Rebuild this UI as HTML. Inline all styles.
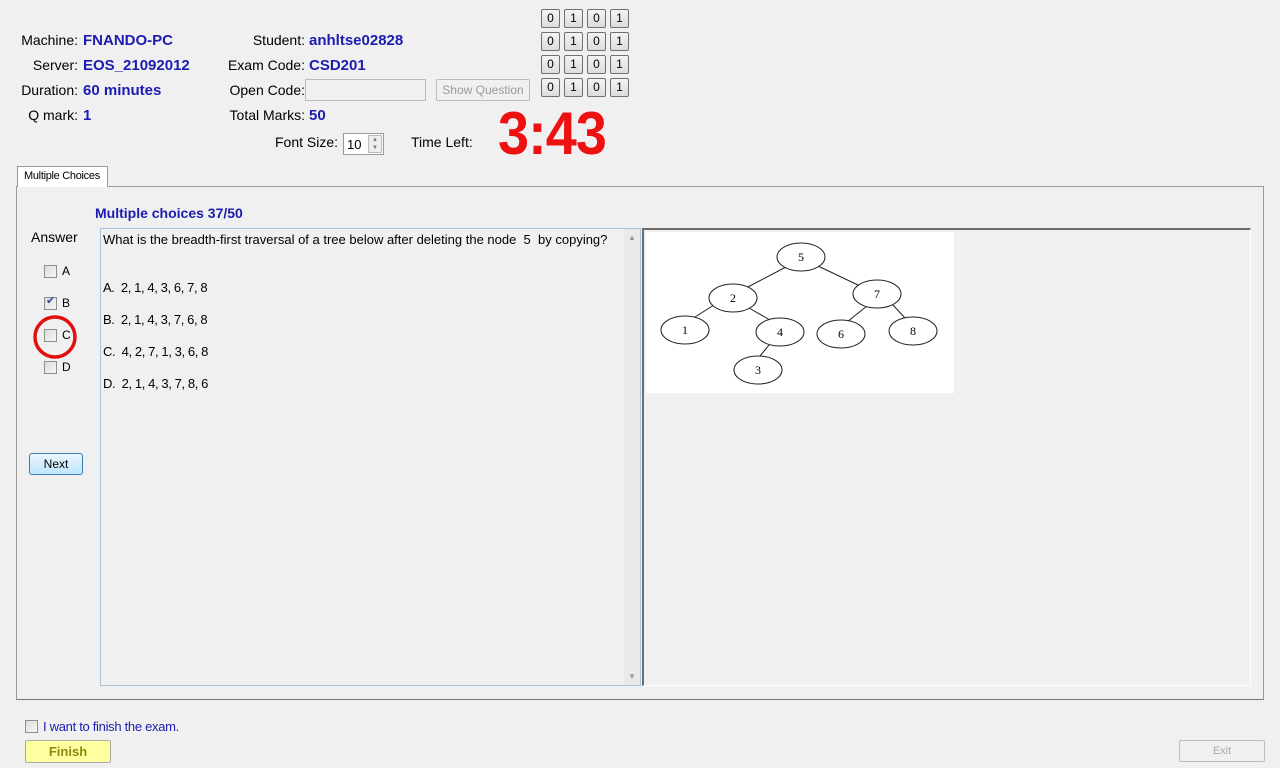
<!DOCTYPE html>
<html><head><meta charset="utf-8"><style>
*{box-sizing:border-box;margin:0;padding:0}
body{width:1280px;height:768px;background:#f0f0f0;font-family:"Liberation Sans",Arial,sans-serif;position:relative;overflow:hidden;color:#000}
.a{position:absolute;white-space:nowrap}
.l{font-size:14px;text-align:right}
.v{font-size:15px;font-weight:bold;color:#1c1cb0}
.b{position:absolute;width:19px;height:19px;border:1px solid #707070;border-radius:2px;background:linear-gradient(#f4f4f4,#dcdcdc);font-size:12px;text-align:center;line-height:17px}
.cb{position:absolute;width:13px;height:13px;border:1px solid #8e8f8f;background:linear-gradient(135deg,#dcdcdc,#f8f8f8)}
.opt{font-size:13px;position:absolute;left:103px;letter-spacing:-0.4px}
</style></head><body>
<div class="a l" style="left:0;width:78px;top:32px">Machine:</div>
<div class="a v" style="left:83px;top:32px">FNANDO-PC</div>
<div class="a l" style="left:0;width:78px;top:57px">Server:</div>
<div class="a v" style="left:83px;top:57px">EOS_21092012</div>
<div class="a l" style="left:0;width:78px;top:82px">Duration:</div>
<div class="a v" style="left:83px;top:82px">60 minutes</div>
<div class="a l" style="left:0;width:78px;top:107px">Q mark:</div>
<div class="a v" style="left:83px;top:107px">1</div>
<div class="a l" style="left:200px;width:105px;top:32px">Student:</div>
<div class="a v" style="left:309px;top:32px">anhltse02828</div>
<div class="a l" style="left:200px;width:105px;top:57px">Exam Code:</div>
<div class="a v" style="left:309px;top:57px">CSD201</div>
<div class="a l" style="left:200px;width:105px;top:82px">Open Code:</div>
<div class="a" style="left:305px;top:79px;width:121px;height:22px;border:1px solid #bbb;background:#f0f0f0"></div>
<div class="a" style="left:436px;top:79px;width:94px;height:22px;border:1px solid #bcbcbc;border-radius:2px;font-size:12px;color:#9a9a9a;text-align:center;line-height:20px">Show Question</div>
<div class="a l" style="left:200px;width:105px;top:107px">Total Marks:</div>
<div class="a v" style="left:309px;top:107px">50</div>
<div class="a" style="left:275px;top:134px;font-size:14px">Font Size:</div>
<div class="a" style="left:343px;top:133px;width:41px;height:22px;border:1px solid #999;background:#fff;font-size:13px;padding:3px 0 0 3px">10</div>
<div class="a" style="left:368px;top:135px;width:14px;height:18px;border:1px solid #bbb;background:#eee;font-size:6px;color:#777;text-align:center;line-height:8px">▲<br>▼</div>
<div class="a" style="left:411px;top:134px;font-size:14px">Time Left:</div>
<div class="a" style="left:498px;top:99px;font-size:60px;font-weight:bold;color:#ee1111;letter-spacing:-1px;transform:scaleX(0.93);transform-origin:left top">3:43</div>

<div class="b" style="left:541px;top:9px">0</div><div class="b" style="left:564px;top:9px">1</div><div class="b" style="left:587px;top:9px">0</div><div class="b" style="left:610px;top:9px">1</div>
<div class="b" style="left:541px;top:32px">0</div><div class="b" style="left:564px;top:32px">1</div><div class="b" style="left:587px;top:32px">0</div><div class="b" style="left:610px;top:32px">1</div>
<div class="b" style="left:541px;top:55px">0</div><div class="b" style="left:564px;top:55px">1</div><div class="b" style="left:587px;top:55px">0</div><div class="b" style="left:610px;top:55px">1</div>
<div class="b" style="left:541px;top:78px">0</div><div class="b" style="left:564px;top:78px">1</div><div class="b" style="left:587px;top:78px">0</div><div class="b" style="left:610px;top:78px">1</div>

<div class="a" style="left:16px;top:186px;width:1248px;height:514px;border:1px solid #9a9a9a;border-bottom-color:#777"></div>
<div class="a" style="left:17px;top:166px;width:91px;height:21px;border:1px solid #9a9a9a;border-bottom:none;background:#fff;font-size:11px;padding:3px 0 0 6px;letter-spacing:-0.3px">Multiple Choices</div>

<div class="a" style="left:95px;top:205px;font-size:14px;font-weight:bold;color:#1c1cb0">Multiple choices 37/50</div>
<div class="a" style="left:31px;top:229px;font-size:14px">Answer</div>
<div class="cb" style="left:44px;top:265px"></div><div class="a" style="left:62px;top:264px;font-size:12px">A</div>
<div class="cb" style="left:44px;top:297px"></div><div class="a" style="left:46px;top:294px;font-size:11px;color:#3a4a9a">✔</div><div class="a" style="left:62px;top:296px;font-size:12px">B</div>
<div class="cb" style="left:44px;top:329px"></div><div class="a" style="left:62px;top:328px;font-size:12px">C</div>
<div class="cb" style="left:44px;top:361px"></div><div class="a" style="left:62px;top:360px;font-size:12px">D</div>
<svg class="a" style="left:30px;top:313px" width="50" height="50"><circle cx="25" cy="24" r="20" fill="none" stroke="#e01010" stroke-width="3.5"/></svg>
<div class="a" style="left:29px;top:453px;width:54px;height:22px;border:1px solid #3c7fb1;border-radius:3px;background:linear-gradient(#eaf6fd,#bee6fd);font-size:12px;text-align:center;line-height:20px">Next</div>

<div class="a" style="left:100px;top:228px;width:541px;height:458px;border:1px solid #a8c4dc;background:#f0f0f0"></div>
<div class="a" style="left:624px;top:229px;width:16px;height:456px;background:#eaeaea;font-size:8px;color:#999;text-align:center"><div style="margin-top:4px">▲</div><div style="position:absolute;bottom:4px;width:16px">▼</div></div>
<div class="a" style="left:103px;top:232px;font-size:13px">What is the breadth-first traversal of a tree below after deleting the node &nbsp;5 &nbsp;by copying?</div>
<div class="opt" style="top:280px">A. &nbsp;2, 1, 4, 3, 6, 7, 8</div>
<div class="opt" style="top:312px">B. &nbsp;2, 1, 4, 3, 7, 6, 8</div>
<div class="opt" style="top:344px">C. &nbsp;4, 2, 7, 1, 3, 6, 8</div>
<div class="opt" style="top:376px">D. &nbsp;2, 1, 4, 3, 7, 8, 6</div>

<div class="a" style="left:642px;top:228px;width:609px;height:458px;border:1px solid #fff;border-top:2px solid #6d6d6d;border-left:2px solid #6d6d6d"></div>
<svg class="a" style="left:646px;top:232px" width="308" height="161">
<rect width="308" height="161" fill="#fff"/>
<g stroke="#222" stroke-width="1" fill="none" transform="translate(-646,-232)">
<line x1="786" y1="267" x2="746" y2="288"/><line x1="818" y1="266" x2="860" y2="286"/>
<line x1="714" y1="305" x2="695" y2="317"/><line x1="749" y1="308" x2="770" y2="320"/>
<line x1="867" y1="306" x2="847" y2="322"/><line x1="893" y1="305" x2="905" y2="318"/>
<line x1="769" y1="345" x2="760" y2="356"/>
<g fill="#fff"><ellipse cx="801" cy="257" rx="24" ry="14"/><ellipse cx="733" cy="298" rx="24" ry="14"/><ellipse cx="877" cy="294" rx="24" ry="14"/><ellipse cx="685" cy="330" rx="24" ry="14"/><ellipse cx="780" cy="332" rx="24" ry="14"/><ellipse cx="841" cy="334" rx="24" ry="14"/><ellipse cx="913" cy="331" rx="24" ry="14"/><ellipse cx="758" cy="370" rx="24" ry="14"/></g>
</g>
<g font-family="Liberation Serif,serif" font-size="12" text-anchor="middle" transform="translate(-646,-232)">
<text x="801" y="261">5</text><text x="733" y="302">2</text><text x="877" y="298">7</text><text x="685" y="334">1</text><text x="780" y="336">4</text><text x="841" y="338">6</text><text x="913" y="335">8</text><text x="758" y="374">3</text></g>
</svg>

<div class="cb" style="left:25px;top:720px"></div>
<div class="a" style="left:43px;top:719px;font-size:13px;color:#1c1cb0;letter-spacing:-0.3px">I want to finish the exam.</div>
<div class="a" style="left:25px;top:740px;width:86px;height:23px;border:1px solid #aaa;border-radius:2px;background:#ffffa0;font-size:13px;font-weight:bold;color:#8a8a10;text-align:center;line-height:21px">Finish</div>
<div class="a" style="left:1179px;top:740px;width:86px;height:22px;border:1px solid #bcbcbc;border-radius:2px;font-size:11px;color:#aaa;text-align:center;line-height:20px">Exit</div>
</body></html>
